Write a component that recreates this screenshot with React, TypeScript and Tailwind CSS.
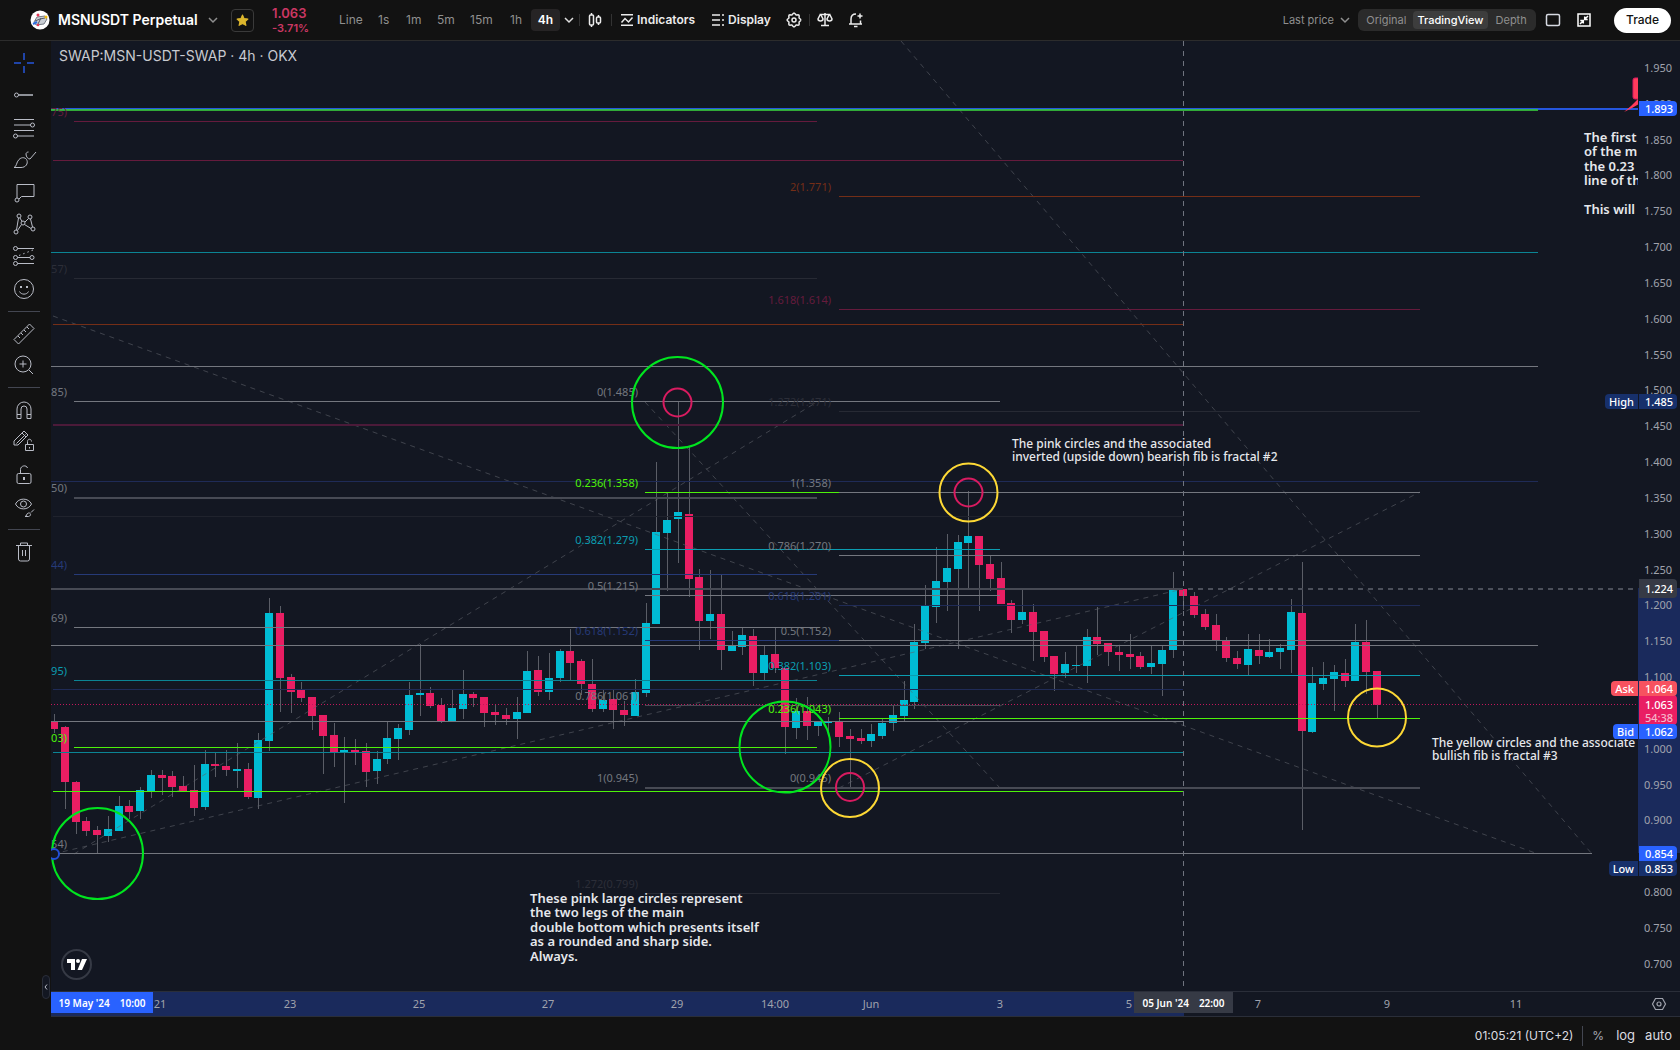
import type { ReactNode } from "react";

const UP = "#00bcd4";
const DOWN = "#e91e63";
const GRAY = "#74777f";
const GRAY_DIM = "#474a54";
const DARK = "#272a34";
const BLUE = "#263a78";
const BLUE_DIM = "#1f2b57";
const TEAL = "#0b9db1";
const TEAL_DIM = "#0b8494";
const GREEN = "#4df20a";
const PINK = "#651b3d";
const RUST = "#742e17";

/* [direction, body top, body bottom, high, low] in chart pixels */
type Candle = [0 | 1, number, number, number, number];

const CANDLES: Candle[] = [
  [0, 722, 729, 714, 733], [0, 727, 782, 726, 809], [0, 782, 822, 781, 834], [0, 821, 831, 817, 836],
  [0, 830, 835, 826, 853], [1, 829, 836, 816, 842], [1, 806, 831, 796, 831], [0, 806, 812, 800, 819],
  [1, 790, 811, 787, 819], [1, 775, 791, 770, 798], [0, 775, 778, 770, 795], [0, 776, 787, 771, 797],
  [0, 786, 791, 776, 792], [0, 790, 808, 765, 816], [1, 764, 807, 750, 810], [0, 764, 766, 753, 777],
  [0, 766, 770, 750, 776], [1, 769, 771, 743, 788], [0, 769, 797, 763, 799], [1, 740, 798, 733, 809],
  [1, 613, 741, 598, 751], [0, 613, 678, 606, 712], [0, 677, 692, 674, 713], [0, 690, 698, 682, 702],
  [0, 697, 716, 697, 730], [0, 715, 736, 715, 774], [0, 735, 752, 723, 767], [1, 750, 752, 737, 803],
  [0, 750, 752, 739, 765], [0, 751, 772, 743, 787], [1, 759, 771, 751, 784], [1, 738, 759, 722, 764],
  [1, 728, 739, 724, 760], [1, 695, 730, 682, 735], [1, 693, 695, 644, 716], [0, 693, 706, 687, 708],
  [0, 705, 721, 698, 723], [1, 708, 721, 690, 721], [1, 694, 709, 670, 719], [0, 694, 698, 692, 707],
  [0, 697, 713, 697, 727], [0, 712, 715, 705, 725], [0, 715, 719, 708, 725], [1, 712, 719, 697, 739],
  [1, 671, 713, 651, 713], [0, 670, 692, 656, 696], [1, 678, 692, 653, 700], [1, 651, 678, 649, 682],
  [0, 651, 663, 629, 680], [0, 661, 684, 659, 695], [0, 684, 709, 659, 712], [1, 700, 709, 690, 712],
  [0, 699, 710, 689, 729], [0, 710, 715, 701, 726], [1, 692, 716, 679, 716], [1, 623, 693, 603, 697],
  [1, 532, 624, 462, 624], [1, 520, 533, 493, 591], [1, 512, 519, 402, 563], [0, 514, 579, 447, 597],
  [0, 577, 621, 569, 650], [1, 614, 621, 570, 639], [0, 614, 650, 575, 670], [1, 646, 651, 631, 651],
  [1, 635, 647, 628, 655], [0, 636, 673, 629, 686], [1, 655, 673, 646, 680], [0, 654, 668, 628, 673],
  [0, 668, 727, 668, 754], [1, 711, 728, 698, 739], [0, 711, 726, 697, 740], [1, 721, 726, 721, 736],
  [1, 721, 723, 717, 732], [0, 721, 737, 712, 747], [0, 736, 739, 729, 788], [0, 738, 741, 729, 744],
  [1, 734, 741, 724, 747], [1, 723, 736, 719, 739], [1, 715, 723, 706, 731], [1, 700, 716, 681, 721],
  [1, 642, 702, 624, 709], [1, 605, 643, 585, 649], [1, 581, 607, 547, 623], [1, 568, 582, 534, 611],
  [1, 542, 569, 535, 649], [1, 536, 543, 491, 588], [0, 536, 565, 536, 611], [0, 564, 579, 556, 591],
  [0, 578, 604, 562, 604], [0, 603, 620, 600, 633], [1, 612, 620, 588, 624], [0, 612, 632, 604, 661],
  [0, 631, 657, 631, 662], [0, 656, 674, 656, 691], [1, 664, 673, 652, 678], [1, 665, 666, 646, 673],
  [1, 637, 666, 629, 683], [0, 637, 644, 607, 655], [0, 643, 652, 643, 666], [0, 652, 655, 646, 671],
  [0, 654, 657, 634, 669], [0, 656, 667, 652, 669], [1, 663, 667, 646, 674], [1, 650, 664, 646, 696],
  [1, 589, 650, 572, 658], [0, 589, 596, 589, 610], [0, 596, 615, 592, 618], [0, 614, 627, 609, 630],
  [0, 625, 640, 614, 651], [0, 640, 658, 637, 662], [0, 658, 664, 651, 669], [1, 649, 665, 634, 675],
  [0, 650, 656, 634, 664], [1, 652, 657, 639, 658], [1, 648, 652, 644, 669], [1, 612, 650, 599, 673],
  [0, 613, 731, 562, 830], [1, 683, 732, 667, 733], [1, 678, 684, 662, 690], [1, 672, 679, 665, 711],
  [0, 673, 681, 659, 687], [1, 642, 681, 624, 681], [0, 642, 672, 620, 694], [0, 671, 705, 671, 718],
];

/* [x start, x end, y, colour, thickness] */
type Level = [number, number, number, string, number];

const LEVELS: Level[] = [
  [51, 1538, 252, TEAL_DIM, 1],
  [51, 1538, 366, GRAY, 1],
  [51, 1538, 481, BLUE_DIM, 1],
  [51, 1183, 588, GRAY_DIM, 2],
  [51, 1538, 645, GRAY, 1],
  [51, 1592, 853, GRAY, 1],
  [53, 1183, 160, PINK, 1],
  [53, 1183, 324, RUST, 1],
  [53, 1183, 424, "#4b1a39", 2],
  [53, 1183, 516, "#20232d", 1],
  [53, 1183, 689, BLUE_DIM, 1],
  [51, 1183, 721, GRAY, 1],
  [53, 1183, 752, TEAL_DIM, 1],
  [53, 1183, 791, GREEN, 1],
  [74, 817, 121, PINK, 1],
  [74, 817, 278, DARK, 1],
  [74, 817, 401, GRAY, 1],
  [74, 817, 497, GRAY_DIM, 2],
  [74, 817, 574, BLUE, 1],
  [74, 817, 627, GRAY, 1],
  [74, 817, 680, TEAL_DIM, 1],
  [74, 817, 747, GREEN, 1],
  [645, 1000, 401, GRAY, 1],
  [645, 1000, 549, TEAL, 1],
  [645, 1000, 595, GRAY, 1],
  [645, 839, 640, BLUE, 1],
  [645, 1000, 705, GRAY_DIM, 1],
  [645, 1000, 787, GRAY_DIM, 2],
  [645, 1000, 893, DARK, 1],
  [839, 1420, 196, RUST, 1],
  [839, 1420, 309, PINK, 1],
  [839, 1420, 411, DARK, 1],
  [839, 1420, 492, GRAY, 1],
  [645, 839, 492, GREEN, 1],
  [839, 1420, 555, GRAY, 1],
  [839, 1420, 605, BLUE_DIM, 1],
  [839, 1420, 640, GRAY, 1],
  [839, 1420, 675, TEAL, 1],
  [839, 1420, 718, GREEN, 1],
  [839, 1420, 787, GRAY_DIM, 2],
];

/* [right edge, level y, text, colour] */
const FIB_LABELS: [number, number, string, string][] = [
  [67, 121, "1.618(1.875)", PINK],
  [67, 278, "1.272(1.657)", "#2c2e38"],
  [67, 401, "1(1.485)", GRAY],
  [67, 497, "0.786(1.350)", GRAY],
  [67, 574, "0.618(1.244)", BLUE],
  [67, 627, "0.5(1.169)", GRAY],
  [67, 680, "0.382(1.095)", TEAL],
  [67, 747, "0.236(1.003)", GREEN],
  [67, 853, "0(0.854)", GRAY],
  [638, 401, "0(1.485)", GRAY],
  [638, 492, "0.236(1.358)", GREEN],
  [638, 549, "0.382(1.279)", TEAL],
  [638, 595, "0.5(1.215)", GRAY],
  [638, 640, "0.618(1.152)", BLUE],
  [638, 705, "0.786(1.061)", GRAY],
  [638, 787, "1(0.945)", GRAY],
  [638, 893, "1.272(0.799)", "#2c2e38"],
  [831, 196, "2(1.771)", RUST],
  [831, 309, "1.618(1.614)", PINK],
  [831, 411, "1.272(1.471)", "#2c2e38"],
  [831, 492, "1(1.358)", GRAY],
  [831, 555, "0.786(1.270)", GRAY],
  [831, 605, "0.618(1.201)", BLUE],
  [831, 640, "0.5(1.152)", GRAY],
  [831, 675, "0.382(1.103)", TEAL],
  [831, 718, "0.236(1.043)", GREEN],
  [831, 787, "0(0.945)", GRAY],
];

const TRENDS: [number, number, number, number][] = [
  [74, 854, 817, 402],
  [53, 854, 1183, 589],
  [53, 316, 1538, 854],
  [901, 41, 1592, 854],
  [645, 402, 1000, 788],
  [839, 788, 1420, 492],
];

const CIRCLES: [number, number, number, string][] = [
  [97.5, 853.5, 45.5, "#00e51f"],
  [677.5, 402.5, 45.5, "#00e51f"],
  [785, 747, 45.5, "#00e51f"],
  [677.5, 402.5, 14, "#d81b60"],
  [850, 788, 29, "#fdd835"],
  [850, 787, 14, "#d81b60"],
  [968.5, 492.5, 29, "#fdd835"],
  [968.5, 492.5, 14, "#d81b60"],
  [1377, 717.5, 29, "#fdd835"],
];

type Note = { x: number; y: number; size: string; tops: number[]; lines: string[] };

const NOTES: Note[] = [
  {
    x: 530, y: 903, size: "text-[13px] font-semibold", tops: [0, 14, 29, 43, 58],
    lines: ["These pink large circles represent", "the two legs of the main", "double bottom which presents itself", "as a rounded and sharp side.", "Always."],
  },
  {
    x: 1012, y: 448, size: "text-[12px] font-medium", tops: [0, 13],
    lines: ["The pink circles and the associated", "inverted (upside down) bearish fib is fractal #2"],
  },
  {
    x: 1432, y: 747, size: "text-[12px] font-medium", tops: [0, 13],
    lines: ["The yellow circles and the associate", "bullish fib is fractal #3"],
  },
  {
    x: 1584, y: 142, size: "text-[13px] font-semibold", tops: [0, 14, 29, 43, 72],
    lines: ["The first", "of the m", "the 0.23", "line of th", "This will"],
  },
];

function Chart() {
  return (
    <svg className="h-full w-full" role="img" aria-label="MSN-USDT price chart">
      <g transform="translate(-51 -41)">
        {CANDLES.map(([up, top, bottom, high, low], i) => {
          const x = Math.round(54 + i * 10.756);
          return (
            <g key={i} shapeRendering="crispEdges">
              <rect x={x} y={high} width={1} height={low - high} fill="#5a5d66" />
              <rect x={x - 4} y={top} width={8} height={Math.max(bottom - top, 1)} fill={up ? UP : DOWN} />
            </g>
          );
        })}
        <line x1={51} x2={1638} y1={704.5} y2={704.5} stroke="#c2185b" strokeDasharray="1 2" />
        {TRENDS.map(([x1, y1, x2, y2], i) => (
          <line key={i} x1={x1} y1={y1} x2={x2} y2={y2} stroke="#5d6069" strokeOpacity={0.6} strokeDasharray="5 5" />
        ))}
        {LEVELS.map(([x1, x2, y, c, t], i) => (
          <rect key={i} x={x1} y={y} width={x2 - x1} height={t} fill={c} shapeRendering="crispEdges" />
        ))}
        <rect x={51} y={108} width={1587} height={2} fill="#2962ff" fillOpacity={0.85} />
        <rect x={51} y={109} width={1487} height={2} fill="#37c43c" fillOpacity={0.85} />
        {FIB_LABELS.map(([x, y, label, c], i) => (
          <text key={i} x={x} y={y - 5} textAnchor="end" fill={c} className="text-[11px]">
            {label}
          </text>
        ))}
        {CIRCLES.map(([cx, cy, r, c], i) => (
          <circle key={i} cx={cx} cy={cy} r={r} fill="none" stroke={c} strokeWidth={2} />
        ))}
        <circle cx={54} cy={854} r={5} fill="#131722" stroke="#2350d8" strokeWidth={2} />
        <path d="M1633 80q0-2 2-2h5v21h-5q-2 0-2-2z" fill="#ff3b5c" stroke="#d81b60" />
        <path d="M1624 112l7-6 8-8v6l-7 4z" fill="#ff3b5c" />
        <line x1={1183.5} x2={1183.5} y1={41} y2={991} stroke="#70747f" strokeDasharray="5 5" />
        <line x1={1188} x2={1638} y1={589} y2={589} stroke="#4b4f5a" strokeWidth={2} strokeDasharray="5 5" />
        {NOTES.map((n) =>
          n.lines.map((line, i) => (
            <text key={`${n.x}-${i}`} x={n.x} y={n.y + n.tops[i]} fill="#e6e8ec" className={n.size}>
              {line}
            </text>
          )),
        )}
      </g>
    </svg>
  );
}

function Icon({ size = 28, children, width = 1 }: { size?: number; children: ReactNode; width?: number }) {
  return (
    <svg width={size} height={size} viewBox={`0 0 ${size} ${size}`} fill="none" stroke="currentColor" strokeWidth={width} aria-hidden="true">
      {children}
    </svg>
  );
}

const DRAW_TOOLS: [string, ReactNode][] = [
  ["Cross", <g key="a" stroke="#2044a8" strokeWidth={2}><path d="M14 4v7M14 17v7M4 14h7M17 14h7" /></g>],
  ["Trend line", <g key="b"><circle cx="6.5" cy="14" r="2" /><path d="M8.500 14H23" strokeWidth={1.500} /></g>],
  ["Fibonacci", <g key="c"><path d="M4 5.500h20M4 11h17M4 16.500h20M7 22h17" /><circle cx="22.500" cy="11" r="2" /><circle cx="5.500" cy="22" r="2" /></g>],
  ["Brush", <g key="d"><path d="M4 21.500c3-1 2-5 5-8 3-3 7-2 8 1s-1 7-6 7zM16 8c0 3 2 5 4 5l6-7M18.500 6c-1.500 0-2.500 1-2.500 2" /></g>],
  ["Text", <g key="e"><path d="M7 20V6.500h17v12H11.500L9 21" /><circle cx="7" cy="22" r="2" /></g>],
  ["Patterns", <g key="f"><circle cx="9" cy="6" r="2" /><circle cx="20" cy="7" r="2" /><circle cx="6" cy="22" r="2" /><circle cx="23" cy="19" r="2" /><circle cx="13" cy="13" r="2" /><path d="M8.500 8L6.500 20M10 8l2 3.500M15 12l3.500-3.500M20.500 9l2 8M14.500 14.500l6.500 4M11.500 14.500L7.500 20.500" /></g>],
  ["Prediction", <g key="g"><path d="M7.500 5.500H24M7.500 14.500H20M7.500 20.500H24" /><circle cx="5.500" cy="5.500" r="2" /><circle cx="5.500" cy="14.500" r="2" /><circle cx="5.500" cy="20.500" r="2" /><circle cx="22" cy="14.500" r="2" /><path d="M9 12.500L23 7" strokeDasharray="1.500 3" /></g>],
  ["Icons", <g key="h"><circle cx="14" cy="14" r="9.500" /><path d="M9.500 16.500c1.500 3.500 7.500 3.500 9 0" /><path d="M11 11v2M17 11v2" strokeWidth={2} /></g>],
];

const MEASURE_TOOLS: [string, ReactNode][] = [
  ["Measure", <g key="a"><path d="M4 19.500L19.500 4l4.500 4.500L8.500 24zM8 16l2 2M11 13l2 2M14 10l2 2M17 7l2 2" /></g>],
  ["Zoom in", <g key="b"><circle cx="13" cy="13" r="8" /><path d="M13 9.500v7M9.500 13h7M19 19l4 4" /></g>],
];

const LOCK_TOOLS: [string, ReactNode][] = [
  ["Magnet", <g key="a"><path d="M7 22.500V13a7 7 0 0 1 14 0v9.500h-4V13a3 3 0 0 0-6 0v9.500zM7 18.500h4M17 18.500h4" /></g>],
  ["Drawing mode", <g key="b"><path d="M4 17v-4L14 3l4 4L8 17zM12 5l4 4M6.500 15.500l9-9M15.500 16.500h8v6h-8zM17.500 16.500v-3c0-3 4-3 4 0" /><path d="M19.500 19v1.500" /></g>],
  ["Lock", <g key="c"><rect x="7" y="12.500" width="14" height="10" rx="1.500" /><path d="M10.500 12V8.500c0-4 6-5 7-1.500" /><path d="M14 16v3" strokeWidth={2} /></g>],
  ["Hide drawings", <g key="d"><path d="M5.500 11c3-6.500 13-6.500 16 0-3 6.500-13 6.500-16 0z" /><circle cx="13.500" cy="11" r="3" /><path d="M15 23.500c2 0 1-3 3.500-3.500s3 3 0 3.500zM21 19.500l3-3" /></g>],
];

const TRASH: [string, ReactNode][] = [
  ["Remove", <g key="a"><path d="M6 7.500h16M8.500 7.500V21q0 2 2 2h7q2 0 2-2V7.500M10.500 7.500V5h7v2.500M12.500 12v6M15.500 12v6" /></g>],
];

function ToolGroup({ tools, className }: { tools: [string, ReactNode][]; className: string }) {
  return (
    <div className={`flex w-full flex-col items-center justify-between ${className}`}>
      {tools.map(([name, art]) => (
        <button key={name} type="button" aria-label={name} className="block size-7 text-[#b9bcc6]">
          <Icon>{art}</Icon>
        </button>
      ))}
    </div>
  );
}

function Chevron({ className }: { className: string }) {
  return (
    <svg width="10" height="10" viewBox="0 0 10 10" fill="none" stroke="currentColor" strokeWidth="1.500" className={className} aria-hidden="true">
      <path d="M1 3l4 4 4-4" />
    </svg>
  );
}

function Divider() {
  return <span className="h-3 w-px bg-[#333333]" />;
}

const GEAR = Array.from({ length: 49 }, (_, i) => {
  const a = (i / 48) * Math.PI * 2;
  const r = 6.2 + 0.7 * Math.cos(a * 8);
  return `${i ? "L" : "M"}${(8 + r * Math.cos(a)).toFixed(2)} ${(8 + r * Math.sin(a)).toFixed(2)}`;
}).join("");

function Header() {
  return (
    <header className="flex h-[41px] shrink-0 items-center justify-between border-b border-[#2c2c2c] bg-[#121212] pr-[9px] pl-[30px] text-[12px] leading-4 text-[#8f8f8f]">
      <div className="flex items-center">
        <svg width="20" height="20" viewBox="0 0 20 20" aria-hidden="true">
          <circle cx="10" cy="10" r="9.500" fill="#fff" />
          <path d="M4 12l3-5 8-1 2 3-3 5-8 1z" fill="#c9ced4" stroke="#777d86" />
          <path d="M5 11l5-2 5-1M8 14l3-6" stroke="#555b66" fill="none" />
          <path d="M3 14l4-2" stroke="#2f6fe0" strokeWidth="2" />
          <circle cx="8" cy="5" r="1.500" fill="#e53958" />
          <circle cx="16" cy="7" r="1.500" fill="#f0b90b" />
          <circle cx="8" cy="15" r="1.300" fill="#e53958" />
        </svg>
        <button type="button" className="ml-2 flex items-center text-[14px] font-semibold text-white">
          <span className="w-[142px] text-left whitespace-nowrap">MSNUSDT Perpetual</span>
          <Chevron className="ml-2 text-[#8f8f8f]" />
        </button>
        <button type="button" aria-label="Favourite" className="ml-[13px] flex size-[23px] items-center justify-center rounded border border-[#3a3a3a]">
          <svg width="13" height="13" viewBox="0 0 24 24" fill="#dcb62d" stroke="#dcb62d" strokeWidth="2" strokeLinejoin="round" aria-hidden="true">
            <path d="M12 2l3 6.500 7 .8-5.200 4.700 1.500 7L12 17.500 5.700 21l1.500-7L2 9.300l7-.8z" />
          </svg>
        </button>
        <div className="ml-[18px] flex w-[46px] flex-col font-semibold text-[#cb3763]">
          <span className="text-[13px] leading-4">1.063</span>
          <span className="text-[11px] leading-[14px]">-3.71%</span>
        </div>
        <nav className="ml-[21px] flex items-center" aria-label="Interval">
          <button type="button" className="w-[26px] text-left">Line</button>
          <button type="button" className="ml-[13px] w-[15px] text-left">1s</button>
          <button type="button" className="ml-[13px] w-[18px] text-left">1m</button>
          <button type="button" className="ml-[13px] w-[20px] text-left">5m</button>
          <button type="button" className="ml-[13px] w-[26px] text-left">15m</button>
          <button type="button" className="ml-[14px] w-[14px] text-left">1h</button>
          <button type="button" className="ml-[7px] h-[22px] w-[29px] rounded bg-[#262425] font-semibold text-white">4h</button>
          <button type="button" aria-label="More intervals" className="ml-1">
            <Chevron className="text-[#e0e0e0]" />
          </button>
        </nav>
        <div className="ml-[5px] flex items-center font-semibold text-[#ececec]">
          <Divider />
          <button type="button" aria-label="Candle style" className="ml-2">
            <Icon size={14} width={1.500}><path d="M3.500 0v2M3.500 12v2M10.500 2v2M10.500 10v2" /><rect x="1.500" y="2" width="4" height="10" rx="1" /><rect x="8.500" y="4" width="4" height="6" rx="1" /></Icon>
          </button>
          <span className="w-[9px]" />
          <Divider />
          <button type="button" className="ml-2 flex items-center gap-[3px]">
            <Icon size={14} width={1.500}><path d="M1 1.800h12M1 12.200h12M1.500 9.500l3.500-4 3.500 3.500 4-4.500" /></Icon>
            Indicators
          </button>
          <button type="button" className="ml-4 flex items-center gap-[3px]">
            <Icon size={14} width={1.500}><path d="M1 2h8M11 2h2M1 7h8M11 7h2M1 12h8M11 12h2" /></Icon>
            Display
          </button>
          <button type="button" aria-label="Settings" className="ml-[15px]">
            <Icon size={16} width={1.500}><path d={GEAR} /><circle cx="8" cy="8" r="2" /></Icon>
          </button>
          <span className="w-[7px]" />
          <Divider />
          <button type="button" aria-label="Compare" className="ml-[7px]">
            <Icon size={16} width={1.500}><path d="M8 1v12M4 13.500h8M2.500 2.500h11" /><path d="M3 3l-2 4c0 2.500 5 2.500 5 0L4 3M12 3l-2 4c0 2.500 5 2.500 5 0l-2-4" /></Icon>
          </button>
          <button type="button" aria-label="Alert" className="ml-[15px]">
            <Icon size={16} width={1.500}><path d="M1 12h13M3 12V7c0-3 2-5 5-5M12.500 8.500V12M6 14.500h3.500M12 1.500v5M9.500 4h5" /></Icon>
          </button>
        </div>
      </div>
      <div className="flex items-center">
        <button type="button" className="flex items-center text-[11px]">
          Last price
          <Chevron className="ml-1.5" />
        </button>
        <div className="ml-2 flex h-[22px] w-[178px] items-center rounded-md bg-[#2b2b2b] px-0.5 text-[11px]">
          <button type="button" className="w-[53px]">Original</button>
          <button type="button" className="h-[18px] w-[76px] rounded bg-[#3d3d3d] font-medium text-white">TradingView</button>
          <button type="button" className="w-[46px]">Depth</button>
        </div>
        <button type="button" aria-label="Layout" className="ml-[9px] text-[#d6d9e2]">
          <Icon size={16} width={1.500}><rect x="1.500" y="2.500" width="13" height="11" rx="1.500" /></Icon>
        </button>
        <button type="button" aria-label="Exit full screen" className="ml-[15px] text-white">
          <Icon size={16} width={1.500}><rect x="2" y="2" width="12" height="12" /><path d="M12 4L8.500 7.500M8.700 4.500v3h3M4 12l3.500-3.500M7.300 11.500v-3h-3" /></Icon>
        </button>
        <button type="button" className="ml-[22px] h-[25px] w-[57px] rounded-full bg-white font-medium text-[#121212]">Trade</button>
      </div>
    </header>
  );
}

const PRICES = Array.from({ length: 26 }, (_, i) => (1.95 - i * 0.05).toFixed(3));

function Tag({ top, name, value, tint, sub, height = "h-[15px]" }: { top: number; name?: string; value: string; tint: string; sub?: string; height?: string }) {
  return (
    <div className="absolute right-[3px] flex gap-px text-[11px] leading-[15px] font-medium text-white" style={{ top }}>
      {name && <span className={`rounded-l-sm px-1 ${tint}`}>{name}</span>}
      <span className={`flex w-[38px] flex-col justify-center rounded-r-sm pl-1.5 ${height} ${tint}`}>
        {value}
        {sub && <span className="leading-3 text-[#f6b5ca]">{sub}</span>}
      </span>
    </div>
  );
}

function PriceAxis() {
  return (
    <aside className="relative w-[42px] shrink-0 text-[11px] text-[#a0a3ad]">
      <div className="absolute inset-x-0 top-[547px] h-[265px] bg-[#1a2a5c]" />
      <div className="relative flex h-[931px] flex-col justify-between pt-[19px] pl-1.5">
        {PRICES.map((p) => (
          <span key={p} className="leading-4">{p}</span>
        ))}
      </div>
      <Tag top={60} value="1.893" tint="bg-[#2962ff]" />
      <Tag top={353} name="High" value="1.485" tint="bg-[#17306b]" />
      <Tag top={538} value="1.224" tint="bg-[#363a45]" height="h-[19px]" />
      <Tag top={654} value="1.063" sub="54:38" tint="bg-[#e91e63]" height="h-[30px]" />
      <Tag top={640} name="Ask" value="1.064" tint="bg-[#f7525f]" />
      <Tag top={683} name="Bid" value="1.062" tint="bg-[#2962ff]" />
      <Tag top={805} value="0.854" tint="bg-[#2962ff]" />
      <Tag top={820} name="Low" value="0.853" tint="bg-[#17306b]" />
    </aside>
  );
}

const TIMES: [number, string][] = [
  [109, "21"], [239, "23"], [368, "25"], [497, "27"], [626, "29"], [724, "14:00"],
  [820, "Jun"], [949, "3"], [1078, "5"], [1207, "7"], [1336, "9"], [1465, "11"],
];

function TimeAxis() {
  return (
    <div className="flex h-[26px] shrink-0 border-y border-[#2a2e39] text-[11px] leading-[23px] text-[#a0a3ad]">
      <div className="relative min-w-0 flex-1 overflow-hidden">
        <div className="absolute inset-y-0 left-0 w-[1133px] bg-[#1a2a5c]" />
        {TIMES.map(([x, t]) => (
          <span key={t} className="absolute w-12 -translate-x-1/2 text-center" style={{ left: x }}>{t}</span>
        ))}
        <span className="absolute top-0 left-0 flex h-[21px] w-[102px] justify-center gap-2.5 bg-[#2962ff] text-[10px] font-semibold text-white">
          <span>19 May '24</span>
          <span>10:00</span>
        </span>
        <span className="absolute top-0 left-[1083px] flex h-[21px] w-[99px] justify-center gap-2.5 bg-[#363a45] text-[10px] font-semibold text-white">
          <span>05 Jun '24</span>
          <span>22:00</span>
        </span>
      </div>
      <button type="button" aria-label="Axis settings" className="flex w-[42px] items-center justify-center">
        <Icon size={16} width={1.200}><path d="M4.500 2.500h7L14.500 8l-3 5.500h-7L1.500 8z" /><circle cx="8" cy="8" r="2" /></Icon>
      </button>
    </div>
  );
}

export default function App() {
  return (
    <div className="flex min-h-screen flex-col bg-[#121212] font-['Inter',sans-serif]">
      <Header />
      <div className="flex min-h-[976px] flex-1">
        <aside className="relative flex w-[51px] shrink-0 flex-col items-center pt-2 pr-[3px]">
          <ToolGroup tools={DRAW_TOOLS} className="h-[254px]" />
          <div className="mt-2 h-px w-8 bg-[#434651]" />
          <ToolGroup tools={MEASURE_TOOLS} className="mt-2 h-[59px]" />
          <div className="mt-2 h-px w-8 bg-[#434651]" />
          <ToolGroup tools={LOCK_TOOLS} className="mt-2 h-[125px]" />
          <div className="mt-2 h-px w-8 bg-[#434651]" />
          <ToolGroup tools={TRASH} className="mt-2 h-7" />
          <button type="button" aria-label="Collapse toolbar" className="absolute right-px bottom-[18px] flex h-6 w-2 items-center justify-center rounded border border-[#2a2e39] bg-[#131722] text-[#b9bcc6]">
            <svg width="4" height="6" viewBox="0 0 4 6" fill="none" stroke="currentColor" aria-hidden="true"><path d="M3 .5L1 3l2 2.500" /></svg>
          </button>
        </aside>
        <main className="flex min-w-0 flex-1 flex-col bg-[#131722] font-['Noto_Sans',sans-serif]">
          <div className="flex min-h-0 flex-1">
            <div className="relative min-w-0 flex-1 overflow-hidden">
              <div className="absolute inset-0">
                <Chart />
              </div>
              <h1 className="absolute top-1.5 left-2 font-['Inter',sans-serif] text-[14px] leading-[18px] text-[#c8cad0]">SWAP:MSN-USDT-SWAP · 4h · OKX</h1>
              <a href="#tradingview" aria-label="TradingView" className="absolute bottom-[11px] left-2.5 flex size-[31px] items-center justify-center rounded-full border-2 border-[#363a45] bg-[#131722]">
                <svg width="20" height="11" viewBox="0 0 20 11" fill="#fff" aria-hidden="true">
                  <path d="M0 0h8v11H4V4H0z" /><circle cx="11" cy="2" r="2" /><path d="M15 0h5l-5 11h-4.500z" />
                </svg>
              </a>
            </div>
            <PriceAxis />
          </div>
          <TimeAxis />
        </main>
      </div>
      <footer className="flex h-[33px] shrink-0 items-center justify-end pt-1 pr-2 text-[13px] text-[#dcdce0]">
        <button type="button" className="text-[12px]">01:05:21 (UTC+2)</button>
        <span className="mx-[9px] h-5 w-px bg-[#434651]" />
        <button type="button" className="text-[12px] text-[#a8abb5]">%</button>
        <button type="button" className="ml-3">log</button>
        <button type="button" className="ml-2.5">auto</button>
      </footer>
    </div>
  );
}
